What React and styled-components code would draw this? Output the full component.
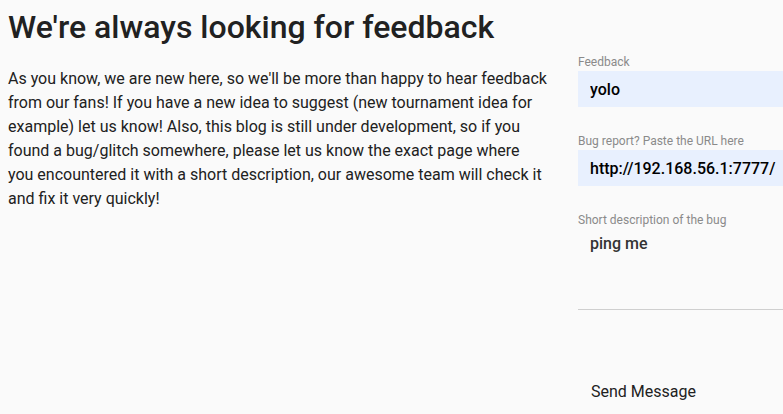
import React from "react";
import styled, { createGlobalStyle } from "styled-components";

const GlobalStyle = createGlobalStyle`
  html, body { margin: 0; padding: 0; background: #fafafa; overflow: hidden; }
  body { font-family: Roboto, "Liberation Sans", sans-serif; color: #212121; }
`;

const Page = styled.div`
  display: grid;
  grid-template-columns: 539.5px 300px;
  column-gap: 30.5px;
  padding: 0 8px;
  width: 900px;
`;

const Intro = styled.div`
  display: flex;
  flex-direction: column;
`;

const Title = styled.h1`
  margin: 8px 0 0;
  font-size: 32px;
  line-height: 38px;
  font-weight: 500;
  color: #212121;
  white-space: nowrap;
`;

const Text = styled.p`
  margin: 21px 0 0;
  font-size: 16px;
  line-height: 24px;
  color: #212121;
`;

const Form = styled.form`
  display: flex;
  flex-direction: column;
  padding-top: 55px;
`;

const Field = styled.label`
  display: flex;
  flex-direction: column;
  margin-bottom: ${(p) => p.gap || 20}px;
`;

const Label = styled.span`
  font-size: 12px;
  line-height: 14px;
  color: #8a8a8a;
  margin-bottom: 2px;
`;

const Input = styled.input`
  height: 36px;
  box-sizing: border-box;
  border: none;
  outline: none;
  background: #e8f0fe;
  padding: 0 12px;
  font-family: inherit;
  font-size: 16px;
  font-weight: 500;
  color: #000;
`;

const Area = styled.textarea`
  height: 81px;
  box-sizing: border-box;
  border: none;
  border-bottom: 1px solid #cfcfcf;
  outline: none;
  background: transparent;
  padding: 5px 12px;
  resize: none;
  font-family: inherit;
  font-size: 16px;
  font-weight: 500;
  color: #333;
`;

const Send = styled.button`
  align-self: flex-start;
  margin-top: 52px;
  border: none;
  background: transparent;
  padding: 0 13px;
  font-family: inherit;
  font-size: 16px;
  line-height: 20px;
  color: #212121;
`;

export default function App() {
  return (
    <>
      <GlobalStyle />
      <Page>
        <Intro>
          <Title>We're always looking for feedback</Title>
          <Text>
            As you know, we are new here, so we'll be more than happy to hear
            feedback from our fans! If you have a new idea to suggest (new
            tournament idea for example) let us know! Also, this blog is still
            under development, so if you found a bug/glitch somewhere, please
            let us know the exact page where you encountered it with a short
            description, our awesome team will check it and fix it very quickly!
          </Text>
        </Intro>
        <Form onSubmit={(e) => e.preventDefault()}>
          <Field gap={27}>
            <Label>Feedback</Label>
            <Input defaultValue="yolo" />
          </Field>
          <Field gap={27}>
            <Label>Bug report? Paste the URL here</Label>
            <Input defaultValue="http://192.168.56.1:7777/" />
          </Field>
          <Field gap={0}>
            <Label>Short description of the bug</Label>
            <Area defaultValue="ping me" />
          </Field>
          <Send type="submit">Send Message</Send>
        </Form>
      </Page>
    </>
  );
}
